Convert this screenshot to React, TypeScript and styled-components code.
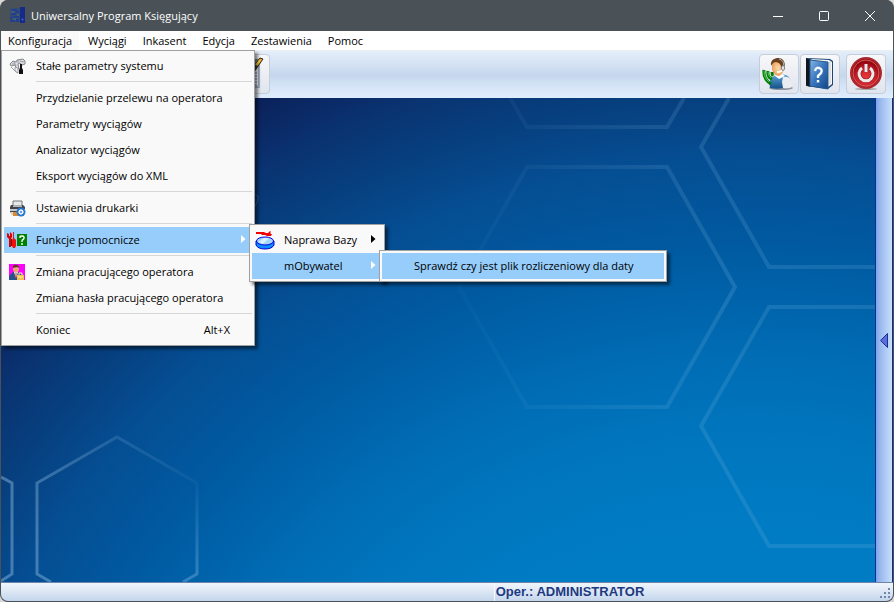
import React from "react";
import styled, { createGlobalStyle, css } from "styled-components";

const Global = createGlobalStyle`
  *, *::before, *::after { box-sizing: border-box; }
  html, body { margin: 0; background: #d8d8d6; }
  body { font-family: "Open Sans", "Noto Sans", sans-serif; font-size: 11px; color: #000; }
  button { font: inherit; color: inherit; }
`;

const Window = styled.div`
  display: flex;
  flex-direction: column;
  height: 100vh;
  border: solid #4a5257;
  border-width: 0 1px 1px 1px;
  border-radius: 8px;
  overflow: hidden;
  background: #4a5257;
`;

const TitleBar = styled.header`
  display: flex;
  align-items: center;
  height: 31px;
  flex: none;
  padding-left: 8px;
  background: #4a5257;
  color: #fff;
`;

const WindowTitle = styled.h1`
  flex: 1;
  margin: 0 0 0 5px;
  font-size: 11px;
  font-weight: 400;
`;

const CaptionButton = styled.button`
  display: grid;
  place-items: center;
  width: 46px;
  height: 31px;
  padding: 0;
  border: 0;
  background: none;
`;

const MenuBar = styled.nav`
  display: flex;
  gap: 2px;
  flex: none;
  height: 19px;
  background: #fff;
`;

const MenuBarSlot = styled.div`
  position: relative;
  display: flex;
`;

const MenuBarButton = styled.button<{ $open?: boolean }>`
  height: 19px;
  padding: 0 7px;
  border: 0;
  line-height: 19px;
  white-space: nowrap;
  background: ${(p) => (p.$open ? "#f9f9f9" : "transparent")};
`;

const Menu = styled.ul<{ $level: "root" | "side" | "wide" }>`
  position: absolute;
  z-index: 2;
  margin: 0;
  padding: 2px;
  list-style: none;
  border: 1px solid #a0a0a0;
  background: #f9f9f9;
  box-shadow: 3px 3px 3px rgba(0, 0, 0, 0.5);
  ${(p) =>
    p.$level === "root" &&
    css`
      top: 100%;
      left: 0;
      width: 254px;
    `}
  ${(p) =>
    p.$level === "side" &&
    css`
      top: -3px;
      left: calc(100% - 3px);
      width: 136px;
    `}
  ${(p) =>
    p.$level === "wide" &&
    css`
      top: -3px;
      left: calc(100% - 3px);
      width: 288px;
    `}
`;

const MenuRow = styled.li`
  position: relative;
`;

const MenuItem = styled.button<{ $active?: boolean }>`
  display: grid;
  grid-template-columns: 32px 1fr auto;
  align-items: center;
  width: 100%;
  height: 26px;
  padding: 0;
  border: 0;
  text-align: left;
  white-space: nowrap;
  background: ${(p) => (p.$active ? "#96cdfa" : "transparent")};
`;

const IconCell = styled.span`
  display: grid;
  place-items: center;
  width: 26px;
`;

const Label = styled.span`
  padding-bottom: 2px;
`;

const Shortcut = styled.kbd`
  margin-right: 22px;
  padding-bottom: 2px;
  font: inherit;
`;

const Arrow = styled.svg<{ $light?: boolean }>`
  display: block;
  margin: 0 6px 2px 0;
  fill: ${(p) => (p.$light ? "#fff" : "#000")};
`;

const Separator = styled.li`
  height: 6px;
  padding: 2px 0 0 32px;
  &::before {
    content: "";
    display: block;
    height: 1px;
    background: #d7d7d7;
  }
`;

const Toolbar = styled.div`
  display: flex;
  align-items: center;
  flex: none;
  height: 48px;
  padding: 0 7px 0 229px;
  background: linear-gradient(#f0f0f0 0, #e3edfa 2px, #d8e5f5 24%, #c5d7ec 53%, #d2e2f5 70%, #e0edfd 100%);
`;

const ToolButton = styled.button`
  display: grid;
  place-items: center;
  width: 40px;
  height: 40px;
  padding: 0;
  border: 1px solid #c6cdd8;
  border-radius: 4px;
  background: linear-gradient(#f7f8fa, #eceef3 50%, #dfe4ee);
`;

const ToolGroup = styled.div`
  display: flex;
  gap: 1px;
  margin-left: auto;
`;

const ExitGroup = styled.div`
  display: flex;
  margin-left: 6px;
`;

const Workspace = styled.main`
  display: flex;
  flex: 1;
  min-height: 0;
`;

const Desktop = styled.div`
  flex: 1;
  min-width: 0;
  background: radial-gradient(
    115% 192% at 86% 166%,
    #007cc5 40%,
    #0076be 50%,
    #006cb4 59%,
    #005ba2 70%,
    #054e93 80%,
    #073f7e 87%,
    #0a3270 93%,
    #0b1f58 100%
  );
`;

const Pattern = styled.svg`
  display: block;
  width: 100%;
  height: 100%;
`;

const SidePanel = styled.aside`
  display: flex;
  align-items: center;
  width: 18px;
  flex: none;
  border: solid #0a3190;
  border-width: 0 1px;
  background: linear-gradient(90deg, #7ba2ee, #94b5ec 20%, #b5cff7 70%, #c9dffa);
`;

const PanelHandle = styled.button`
  padding: 0 0 0 4px;
  border: 0;
  background: none;
  line-height: 0;
`;

const StatusBar = styled.footer`
  display: flex;
  flex: none;
  height: 19px;
  border-top: 1px solid #6b86a8;
  background: linear-gradient(#f0f5fc, #dbe6f4 50%, #c3d5ec);
  color: #1d3a80;
  font: bold 13px/17px "Liberation Sans", sans-serif;
`;

const StatusCell = styled.div<{ $grow: number }>`
  flex: ${(p) => p.$grow} 1 0;
  & + & {
    padding-left: 1px;
    border-left: 1px solid #f6faff;
  }
`;

const Grip = styled.svg`
  align-self: end;
  flex: none;
`;

function AppLogo() {
  return (
    <svg width="17" height="17" viewBox="0 0 17 17" aria-hidden="true">
      <rect x="1" y="1" width="10" height="14" fill="#354c70" />
      <path d="M3 2h5v2H3zM7 4h3v2H7zM2 6h5v2H2zM4 9h6v2H4zM1 10h2v2H1zM1 13h5v2H1zM7 12h3v3H7z" fill="#223e91" />
      <path d="M11 0h5v16h-5z" fill="#142b8b" />
      <path d="M2 5h3M8 8h2M4 12h3" stroke="#587078" />
      <path d="M13.500 11v3M12 12.500h3" stroke="#314eb0" />
    </svg>
  );
}

function HandTools() {
  return (
    <svg width="17" height="17" viewBox="0 0 17 17" aria-hidden="true">
      <path d="M1 6l3-3 3 1 1-2 6-1 2 2v3l-3 1-2-2-2 1 1 5-3-1-1-3-4 1z" fill="#d8dade" stroke="#85878c" />
      <path d="M3 6h3M5 4l2 4M9 2v3M11 3l4 1M2 9l4 4 3 2" stroke="#9b9ea4" fill="none" />
      <path d="M6 9l3 1v5l-3-2z" fill="#eceef0" stroke="#888" strokeWidth=".7" />
      <path d="M11 6h2v4l1 2v4h-4v-4l1-2z" fill="#111" />
    </svg>
  );
}

function Printer() {
  return (
    <svg width="17" height="17" viewBox="0 0 17 17" aria-hidden="true">
      <path d="M4 1h9v5H4z" fill="#e6e9ec" stroke="#777" />
      <path d="M2 5h2v2h9V5h1l2 2v6H1V7z" fill="#3f454b" />
      <path d="M1 9h15v2H1z" fill="#c2c7cc" />
      <path d="M1 12h3v3H2z" fill="#d2d8de" />
      <path d="M4 12h5v4H4z" fill="#d98b2c" />
      <circle cx="12" cy="12" r="4.500" fill="#2878d2" />
      <path d="M12 9v6M9 12h6M10 10l4 4M14 10l-4 4" stroke="#fff" strokeWidth="1" />
      <circle cx="12" cy="12" r="1.500" fill="#2878d2" stroke="#fff" />
    </svg>
  );
}

function ToolsHelp() {
  return (
    <svg width="20" height="16" viewBox="0 0 20 16" aria-hidden="true">
      <path d="M0 1l2 1v2h1V0l2 2v3L4 7v8H2V7L0 5z" fill="#e00000" />
      <path d="M6 0h1v6l2 2v6l-1 2H6l-1-2V8l1-2z" fill="#ee1111" />
      <path d="M4.500 7v7" stroke="#7d0000" />
      <rect x="10" y="2" width="10" height="12" fill="#008000" />
      <path d="M13 6V5q0-1 2-1t2 1v1q0 1-1 1.500T15 9v1M15 11v2" stroke="#fff" strokeWidth="1.400" fill="none" />
    </svg>
  );
}

function Operator() {
  return (
    <svg width="16" height="16" viewBox="0 0 16 16" aria-hidden="true">
      <path fill="#f0f" d="M0 0h16v16H0z" />
      <path d="M0 16v-4l4-4h5l5 3v5z" fill="#27528c" />
      <path d="M5 8h4l-2 6z" fill="#fff" />
      <path d="M7 9v5" stroke="#c33" />
      <path d="M4 3q0-2 3-2t3 2v3q-1 3-3 3T4 6z" fill="#e9a777" />
      <path d="M4 4V2q1-2 4-1 2 0 2 3L8 3z" fill="#63351f" />
      <rect x="8" y="11" width="7" height="5" fill="#f2c14e" />
      <path d="M10 11V9h3v2M9 13h5" stroke="#fff1b8" fill="none" />
    </svg>
  );
}

function Database() {
  return (
    <svg width="20" height="20" viewBox="0 0 20 20" aria-hidden="true">
      <path d="M1 2h8l2 1h2l2-2 1 1-1 1 1 1h1l-1 2h-4l-2-1H7L6 4H1z" fill="#f00000" />
      <path d="M1 11v4q2 4 9 4t9-4v-4z" fill="#0d8bff" stroke="#0000d8" />
      <ellipse cx="10" cy="11" rx="8.500" ry="4" fill="#a5d6fa" stroke="#0000d8" />
      <path d="M4 12l5-4h5l-6 6z" fill="#d9f0ff" />
    </svg>
  );
}

function NotePad() {
  return (
    <svg width="34" height="34" viewBox="0 0 34 34" aria-hidden="true">
      <path d="M6 4h20v26H6z" fill="#fbfdff" stroke="#a3b2c4" strokeWidth="2" />
      <path d="M14 2h12l-2 10H14z" fill="#7d858d" />
      <path d="M10 16h14M10 19h14M10 22h14M10 25h14M10 28h14" stroke="#6588b5" />
      <path d="M27 1l3 1L19 18l-4 2 2-6z" fill="#e9b326" stroke="#2f2a20" />
      <path d="M17 14l5-7 3 2-6 9z" fill="#3b3a36" />
      <path d="M23 8l4-5" stroke="#ffd24a" strokeWidth="2" />
    </svg>
  );
}

function Support() {
  return (
    <svg width="34" height="34" viewBox="0 0 34 34" aria-hidden="true">
      <defs>
        <linearGradient id="shirt" x2="0" y2="1">
          <stop stopColor="#5ea5d8" />
          <stop offset="1" stopColor="#145087" />
        </linearGradient>
        <radialGradient id="face">
          <stop stopColor="#ffd9ae" />
          <stop offset="1" stopColor="#e8a15d" />
        </radialGradient>
      </defs>
      <ellipse cx="19" cy="31" rx="12" ry="2" fill="#8f959e" />
      <path d="M8 31q-2-9 4-12l5-2 7 1q6 3 5 11-10 4-21 2z" fill="url(#shirt)" />
      <path d="M21 20q7-1 8 4l1 6q-3 2-9 1l-1-6z" fill="#e9ecf0" />
      <path d="M13 19l4 3 6-3-3-2h-6z" fill="#fff" />
      <path d="M10 8q0-5 6-5 5 0 6 6l-1 6q-2 4-5 4-5-1-6-7z" fill="url(#face)" />
      <path d="M9 9Q8 2 15 1q7-1 8 7l-2 5-2-3q0-4-5-5-3 0-5 4z" fill="#6a3d1d" />
      <path d="M17 2q5 1 5 8" stroke="#b9bfc6" fill="none" />
      <path d="M21 12q-1 3-6 3" stroke="#fff" strokeWidth="2" fill="none" />
      <ellipse cx="21" cy="11" rx="1.500" ry="2.500" fill="#eceff3" stroke="#787e86" />
      <path d="M2 13q-1 9 7 14M6 14q-1 6 4 8M10 15q0 3 1 4" stroke="#067b0c" strokeWidth="3" fill="none" />
      <path d="M2 14q0 7 5 11M6 15q0 4 3 6" stroke="#36d43c" strokeWidth="1" fill="none" />
    </svg>
  );
}

function HelpBook() {
  return (
    <svg width="34" height="34" viewBox="0 0 34 34" aria-hidden="true">
      <defs>
        <linearGradient id="cover" x2="1" y2="1">
          <stop stopColor="#83b4e5" />
          <stop offset=".5" stopColor="#3673bc" />
          <stop offset="1" stopColor="#124685" />
        </linearGradient>
      </defs>
      <path d="M3 1l24 1 3 2v24l-5 4L3 29z" fill="#1d4679" />
      <path d="M8 2l18 1 3 2v22l-4 3z" fill="#f7f7f4" />
      <path d="M27 5v22" stroke="#c4c9ce" />
      <path d="M3 1l4 2v27l-4-2z" fill="#10161f" />
      <path d="M7 3l18 2v27L7 29z" fill="url(#cover)" stroke="#28598f" />
      <path d="M12 14q1-4 4-3 4 1 2 5l-3 3v2M15 23v3" stroke="#7ca8d2" strokeWidth="3" fill="none" />
      <path d="M12 14q1-4 4-3 4 1 2 5l-3 3v2M15 23v2" stroke="#fff" strokeWidth="2" fill="none" />
    </svg>
  );
}

function Power() {
  return (
    <svg width="34" height="34" viewBox="0 0 34 34" aria-hidden="true">
      <defs>
        <radialGradient id="red" cy=".65">
          <stop stopColor="#e8383a" />
          <stop offset=".65" stopColor="#c5202a" />
          <stop offset="1" stopColor="#960911" />
        </radialGradient>
      </defs>
      <ellipse cx="17" cy="32" rx="11" ry="1" fill="#a8a8ad" />
      <circle cx="17" cy="16" r="15" fill="url(#red)" stroke="#a82a2f" strokeWidth="2" />
      <circle cx="17" cy="16" r="13" fill="none" stroke="#d95c5c" />
      <path d="M13 11a7 7 0 1 0 8 0M17 7v8" fill="none" stroke="#961c21" strokeWidth="4" />
      <path d="M13 11a7 7 0 1 0 8 0M17 7v8" fill="none" stroke="#eceaea" strokeWidth="3" />
    </svg>
  );
}

function ItemArrow({ light }: { light?: boolean }) {
  return (
    <Arrow $light={light} width="5" height="8" viewBox="0 0 5 8" aria-hidden="true">
      <path d="M0 0l4.500 4L0 8z" />
    </Arrow>
  );
}

type Entry = {
  label: string;
  icon?: React.ReactNode;
  shortcut?: string;
  active?: boolean;
  arrow?: boolean;
  children?: React.ReactNode;
};

function Item({ label, icon, shortcut, active, arrow, children }: Entry) {
  return (
    <MenuRow role="none">
      <MenuItem role="menuitem" $active={active} aria-haspopup={arrow ? "menu" : undefined}>
        <IconCell>{icon}</IconCell>
        <Label>{label}</Label>
        {shortcut && <Shortcut>{shortcut}</Shortcut>}
        {arrow && <ItemArrow light={active} />}
      </MenuItem>
      {children}
    </MenuRow>
  );
}

function ConfigurationMenu() {
  return (
    <Menu $level="root" role="menu" aria-label="Konfiguracja">
      <Item label="Stałe parametry systemu" icon={<HandTools />} />
      <Separator role="separator" />
      <Item label="Przydzielanie przelewu na operatora" />
      <Item label="Parametry wyciągów" />
      <Item label="Analizator wyciągów" />
      <Item label="Eksport wyciągów do XML" />
      <Separator role="separator" />
      <Item label="Ustawienia drukarki" icon={<Printer />} />
      <Separator role="separator" />
      <Item label="Funkcje pomocnicze" icon={<ToolsHelp />} active arrow>
        <Menu $level="side" role="menu" aria-label="Funkcje pomocnicze">
          <Item label="Naprawa Bazy" icon={<Database />} arrow />
          <Item label="mObywatel" active arrow>
            <Menu $level="wide" role="menu" aria-label="mObywatel">
              <Item label="Sprawdź czy jest plik rozliczeniowy dla daty" active />
            </Menu>
          </Item>
        </Menu>
      </Item>
      <Separator role="separator" />
      <Item label="Zmiana pracującego operatora" icon={<Operator />} />
      <Item label="Zmiana hasła pracującego operatora" />
      <Separator role="separator" />
      <Item label="Koniec" shortcut="Alt+X" />
    </Menu>
  );
}

function Hexagons() {
  return (
    <Pattern viewBox="0 0 874 484" preserveAspectRatio="xMaxYMin slice" aria-hidden="true">
      <defs>
        <linearGradient id="fadeRight" gradientUnits="userSpaceOnUse" x1="450" y1="0" x2="730" y2="0">
          <stop stopColor="#8ec4e8" stopOpacity=".02" />
          <stop offset="1" stopColor="#8ec4e8" stopOpacity=".18" />
        </linearGradient>
        <linearGradient id="fadeLow" gradientUnits="userSpaceOnUse" x1="30" y1="430" x2="196" y2="370">
          <stop stopColor="#a3cdee" stopOpacity=".38" />
          <stop offset="1" stopColor="#a3cdee" stopOpacity=".04" />
        </linearGradient>
        <linearGradient id="rise" gradientUnits="userSpaceOnUse" x1="0" y1="385" x2="0" y2="484">
          <stop stopColor="#a3cdee" stopOpacity=".04" />
          <stop offset="1" stopColor="#a3cdee" stopOpacity=".32" />
        </linearGradient>
      </defs>
      <g fill="none" strokeWidth="4">
        <path d="M509 0l17 29h140l17-29" stroke="url(#fadeRight)" />
        <path d="M526 69h140l68 120-68 120H526L458 189z" stroke="url(#fadeRight)" />
        <path d="M728 0l-28 49 68 120h110M878 209H768l-68 119 68 120h110" stroke="#7dbbe2" strokeOpacity=".18" />
        <path d="M50 484l-14-8v-91l80-46 80 46" stroke="url(#fadeLow)" strokeWidth="3" />
        <path d="M196 385v91l-14 8" stroke="url(#rise)" strokeWidth="3" />
        <path d="M0 379l11 6v91l-11 7" stroke="#a3cdee" strokeOpacity=".4" strokeWidth="3" />
        <path d="M250 94l7 4q1 6-6 14" stroke="#a3cdee" strokeOpacity=".25" strokeWidth="1" />
      </g>
    </Pattern>
  );
}

export default function App() {
  return (
    <>
      <Global />
      <Window>
        <TitleBar>
          <AppLogo />
          <WindowTitle>Uniwersalny Program Księgujący</WindowTitle>
          <CaptionButton aria-label="Minimalizuj">
            <svg width="10" height="10" stroke="#fff"><path d="M0 5.500h10" /></svg>
          </CaptionButton>
          <CaptionButton aria-label="Maksymalizuj">
            <svg width="10" height="10" stroke="#fff" fill="none"><rect x=".5" y=".5" width="9" height="9" rx="1" /></svg>
          </CaptionButton>
          <CaptionButton aria-label="Zamknij">
            <svg width="10" height="10" stroke="#fff"><path d="M0 0l10 10M10 0L0 10" /></svg>
          </CaptionButton>
        </TitleBar>
        <MenuBar>
          <MenuBarSlot>
            <MenuBarButton $open aria-expanded="true">Konfiguracja</MenuBarButton>
            <ConfigurationMenu />
          </MenuBarSlot>
          {["Wyciągi", "Inkasent", "Edycja", "Zestawienia", "Pomoc"].map((label) => (
            <MenuBarButton key={label}>{label}</MenuBarButton>
          ))}
        </MenuBar>
        <Toolbar>
          <ToolButton aria-label="Notatnik"><NotePad /></ToolButton>
          <ToolGroup>
            <ToolButton aria-label="Wsparcie"><Support /></ToolButton>
            <ToolButton aria-label="Podręcznik"><HelpBook /></ToolButton>
          </ToolGroup>
          <ExitGroup>
            <ToolButton aria-label="Zakończ"><Power /></ToolButton>
          </ExitGroup>
        </Toolbar>
        <Workspace>
          <Desktop><Hexagons /></Desktop>
          <SidePanel>
            <PanelHandle aria-label="Rozwiń panel">
              <svg width="8" height="15" viewBox="0 0 8 15">
                <path d="M7.500 .5v14L.5 7.500z" fill="#5a6ed8" stroke="#1a2f98" />
              </svg>
            </PanelHandle>
          </SidePanel>
        </Workspace>
        <StatusBar>
          <StatusCell $grow={9} />
          <StatusCell $grow={7}>Oper.: ADMINISTRATOR</StatusCell>
          <Grip width="14" height="14" viewBox="0 0 14 14" fill="#7088ae" aria-hidden="true">
            <path d="M9 1h2v2H9zM5 5h2v2H5zM9 5h2v2H9zM1 9h2v2H1zM5 9h2v2H5zM9 9h2v2H9z" />
          </Grip>
        </StatusBar>
      </Window>
    </>
  );
}
